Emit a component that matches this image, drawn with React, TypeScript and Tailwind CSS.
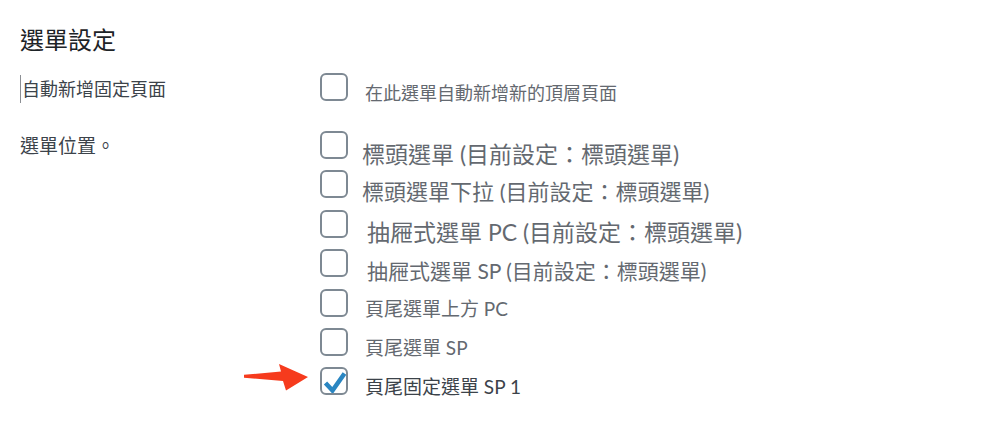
import React from "react";

type Opt = { text: string; size: string; ml: string; mt: string; color: string; checked?: boolean };

const Box = ({ checked }: { checked?: boolean }) => (
  <div className="w-[28px] h-[28px] shrink-0 rounded-[6px] border-2 border-[#7e8993] bg-white">
    {checked && (
      <svg width="24" height="24" viewBox="0 0 24 24" className="block">
        <path d="M3.5 14 L10.5 21.5 L22.5 4.5" fill="none" stroke="#2a86c2" strokeWidth="4.5" strokeLinejoin="miter" />
      </svg>
    )}
  </div>
);

const options: Opt[] = [
  { text: "標頭選單 (目前設定：標頭選單)", size: "text-[23px]", ml: "ml-[14px]", mt: "mt-[9px]", color: "text-[#646970]" },
  { text: "標頭選單下拉 (目前設定：標頭選單)", size: "text-[22px]", ml: "ml-[14px]", mt: "mt-[8px]", color: "text-[#646970]" },
  { text: "抽屜式選單 PC (目前設定：標頭選單)", size: "text-[23px]", ml: "ml-[19px]", mt: "mt-[8px]", color: "text-[#646970]" },
  { text: "抽屜式選單 SP (目前設定：標頭選單)", size: "text-[21px]", ml: "ml-[19px]", mt: "mt-[8px]", color: "text-[#646970]" },
  { text: "頁尾選單上方 PC", size: "text-[19px]", ml: "ml-[17px]", mt: "mt-[6px]", color: "text-[#646970]" },
  { text: "頁尾選單 SP", size: "text-[19px]", ml: "ml-[17px]", mt: "mt-[6px]", color: "text-[#646970]" },
  { text: "頁尾固定選單 SP 1", size: "text-[19px]", ml: "ml-[17px]", mt: "mt-[6px]", color: "text-[#3c434a]", checked: true },
];

export default function App() {
  return (
    <div
      className="relative w-[1002px] h-[442px] bg-white overflow-hidden"
      style={{ fontFamily: "Lato, 'Noto Sans CJK TC', 'Noto Sans', sans-serif" }}
    >
      <h2 className="pt-[26px] pl-[20px] text-[24px] leading-[28px] font-normal text-[#1d2327]">選單設定</h2>

      <div className="mt-[19px] flex h-[28px]">
        <div className="w-[320px] pl-[20px]">
          <span className="inline-block mt-[2px] border-l border-[#8c8f94] pl-[1px] text-[18px] leading-[28px] text-[#3c434a]">
            自動新增固定頁面
          </span>
        </div>
        <div className="flex items-start">
          <Box />
          <span className="ml-[17px] mt-[6px] text-[18px] leading-[28px] text-[#646970]">在此選單自動新增新的頂層頁面</span>
        </div>
      </div>

      <div className="mt-[30px] flex">
        <div className="w-[320px] pl-[20px]">
          <span className="block mt-[1px] text-[19px] leading-[28px] text-[#3c434a]">選單位置。</span>
        </div>
        <div className="flex flex-col">
          {options.map((o, i) => (
            <div key={i} className="flex items-start h-[39.4px]">
              <Box checked={o.checked} />
              <span className={`${o.ml} ${o.mt} ${o.size} leading-[28px] whitespace-nowrap ${o.color}`}>{o.text}</span>
            </div>
          ))}
        </div>
      </div>

      <svg className="absolute left-[241px] top-[360px]" width="70" height="34" viewBox="0 0 70 34">
        <path d="M3 14.8 L40 11.5 L38 4 L67 17 L45 30.5 L42 21 L3 17.8 Z" fill="#f63b1d" />
      </svg>
    </div>
  );
}
